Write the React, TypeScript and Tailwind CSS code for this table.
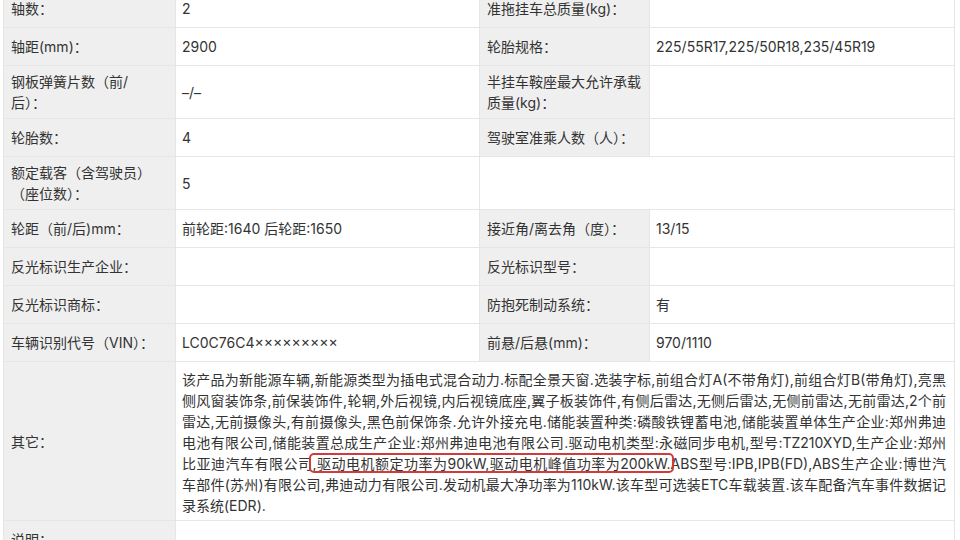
import React from "react";

type Row = {
  l1: React.ReactNode;
  v1?: React.ReactNode;
  l2?: React.ReactNode;
  v2?: React.ReactNode;
  blankLabel?: boolean;
};

const rows: Row[] = [
  { l1: "轴数：", v1: "2", l2: "准拖挂车总质量(kg)：" },
  { l1: "轴距(mm)：", v1: "2900", l2: "轮胎规格：", v2: "225/55R17,225/50R18,235/45R19" },
  {
    l1: (
      <>
        钢板弹簧片数（前/
        <br />
        后）：
      </>
    ),
    v1: "–/–",
    l2: (
      <>
        半挂车鞍座最大允许承载
        <br />
        质量(kg)：
      </>
    ),
  },
  { l1: "轮胎数：", v1: "4", l2: "驾驶室准乘人数（人）：" },
  {
    l1: (
      <>
        额定载客（含驾驶员）
        <br />
        （座位数）：
      </>
    ),
    v1: "5",
    blankLabel: true,
  },
  { l1: "轮距（前/后)mm：", v1: "前轮距:1640 后轮距:1650", l2: "接近角/离去角（度）：", v2: "13/15" },
  { l1: "反光标识生产企业：", l2: "反光标识型号：" },
  { l1: "反光标识商标：", l2: "防抱死制动系统：", v2: "有" },
  { l1: "车辆识别代号（VIN）：", v1: "LC0C76C4×××××××××", l2: "前悬/后悬(mm)：", v2: "970/1110" },
];

const otherLines = [
  "该产品为新能源车辆,新能源类型为插电式混合动力.标配全景天窗.选装字标,前组合灯A(不带角灯),前组合灯B(带角灯),亮黑",
  "侧风窗装饰条,前保装饰件,轮辋,外后视镜,内后视镜底座,翼子板装饰件,有侧后雷达,无侧后雷达,无侧前雷达,无前雷达,2个前",
  "雷达,无前摄像头,有前摄像头,黑色前保饰条.允许外接充电.储能装置种类:磷酸铁锂蓄电池,储能装置单体生产企业:郑州弗迪",
  "电池有限公司,储能装置总成生产企业:郑州弗迪电池有限公司.驱动电机类型:永磁同步电机,型号:TZ210XYD,生产企业:郑州",
];

const labelCls = "bg-[#efefef] border border-[#e6e6e6] pl-[7px] pr-[8px] py-[5px] h-[38px] align-middle";
const valueCls = "bg-white border border-[#e6e6e6] px-[6px] py-[5px] h-[38px] align-middle";
const lineCls = "whitespace-nowrap text-justify [text-align-last:justify]";

export default function App() {
  return (
    <div className="h-[540px] w-[960px] overflow-hidden bg-white font-['Inter','Noto_Sans_CJK_SC',sans-serif] text-[14px] leading-[21px] text-[#333]">
      <div className="-mt-[11px] ml-[3px]">
        <table className="w-[951px] table-fixed border-collapse">
          <colgroup>
            <col className="w-[172px]" />
            <col className="w-[304px]" />
            <col className="w-[170px]" />
            <col className="w-[305px]" />
          </colgroup>
          <tbody>
            {rows.map((r, i) => (
              <tr key={i}>
                <td className={labelCls}>{r.l1}</td>
                <td className={valueCls}>{r.v1}</td>
                <td className={r.blankLabel ? valueCls + " border-r-white" : labelCls}>{r.l2}</td>
                <td className={valueCls}>{r.v2}</td>
              </tr>
            ))}
            <tr>
              <td className={labelCls}>其它：</td>
              <td colSpan={3} className="bg-white border border-[#e6e6e6] pl-[6px] pr-[8px] pt-[7px] pb-[4px] align-middle">
                {otherLines.map((line, i) => (
                  <div key={i} className={lineCls}>
                    {line}
                  </div>
                ))}
                <div className={lineCls}>
                  比亚迪汽车有限公司
                  <span className="relative">
                    ,驱动电机额定功率为90kW,驱动电机峰值功率为200kW.
                    <span className="absolute -left-[3px] -right-[3px] -top-[2px] -bottom-[1px] rounded-[5px] border-[2.5px] border-[#d03c3c]" />
                  </span>
                  ABS型号:IPB,IPB(FD),ABS生产企业:博世汽
                </div>
                <div className={lineCls}>
                  车部件(苏州)有限公司,弗迪动力有限公司.发动机最大净功率为110kW.该车型可选装ETC车载装置.该车配备汽车事件数据记
                </div>
                <div>录系统(EDR).</div>
              </td>
            </tr>
            <tr>
              <td className={labelCls}>说明：</td>
              <td colSpan={3} className={valueCls}></td>
            </tr>
          </tbody>
        </table>
      </div>
    </div>
  );
}
